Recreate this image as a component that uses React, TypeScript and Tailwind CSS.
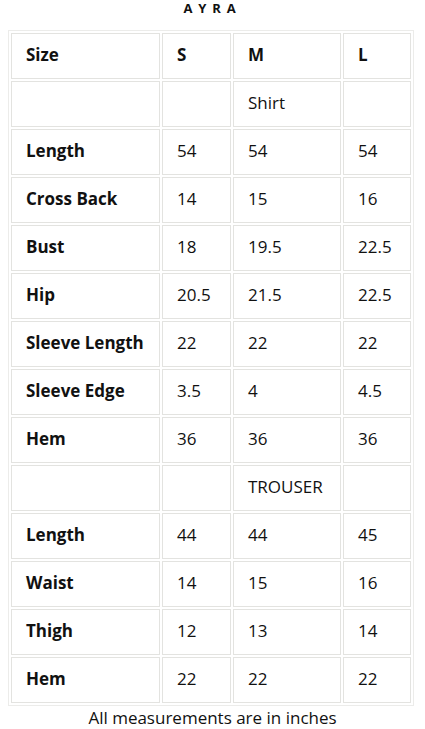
const rows: [string, string, string, string][] = [
	['', '', 'Shirt', ''],
	['Length', '54', '54', '54'],
	['Cross Back', '14', '15', '16'],
	['Bust', '18', '19.5', '22.5'],
	['Hip', '20.5', '21.5', '22.5'],
	['Sleeve Length', '22', '22', '22'],
	['Sleeve Edge', '3.5', '4', '4.5'],
	['Hem', '36', '36', '36'],
	['', '', 'TROUSER', ''],
	['Length', '44', '44', '45'],
	['Waist', '14', '15', '16'],
	['Thigh', '12', '13', '14'],
	['Hem', '22', '22', '22'],
];

const cell = 'border border-[#e3e3e0] h-[46px] px-[14px] pb-[2px] text-left align-middle';

export default function App() {
	return (
		<div className="w-[425px] bg-white text-[#111] font-['Open_Sans',sans-serif]">
			<h1 className="text-center text-[13px] font-bold tracking-[0.45em] h-[30px] leading-[16px]">AYRA</h1>
			<table className="ml-[8px] w-[406px] table-fixed border-separate border-spacing-[2px] border border-[#ececea]">
				<colgroup>
					<col className="w-[149px]" />
					<col className="w-[69px]" />
					<col className="w-[108px]" />
					<col className="w-[68px]" />
				</colgroup>
				<thead>
					<tr className="text-[17px] font-bold">
						<th className={cell}>Size</th>
						<th className={cell}>S</th>
						<th className={cell}>M</th>
						<th className={cell}>L</th>
					</tr>
				</thead>
				<tbody>
					{rows.map((r, i) => (
						<tr key={i} className="text-[17px]">
							<td className={cell + ' font-bold'}>{r[0]}</td>
							<td className={cell}>{r[1]}</td>
							<td className={cell}>{r[2]}</td>
							<td className={cell}>{r[3]}</td>
						</tr>
					))}
				</tbody>
			</table>
			<p className="text-center text-[17px] leading-[24px]">All measurements are in inches</p>
		</div>
	);
}
